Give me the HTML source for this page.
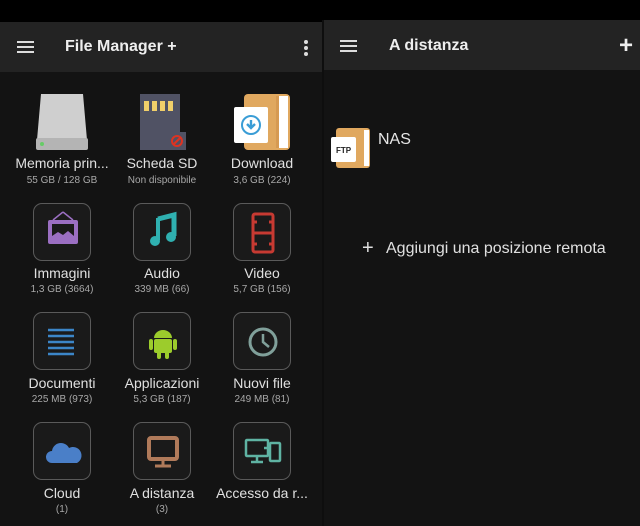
<!DOCTYPE html>
<html><head><meta charset="utf-8"><style>
*{margin:0;padding:0;box-sizing:border-box}
body{width:640px;height:526px;background:#131313;font-family:"Liberation Sans",sans-serif;position:relative;overflow:hidden;color:#e6e6e6}
.a{position:absolute}
.bar{background:#232323}
.lbl{position:absolute;width:110px;text-align:center;font-size:14px;color:#e0e0e0;white-space:nowrap}
.sub{position:absolute;width:110px;text-align:center;font-size:10px;color:#a8a8a8}
.box{position:absolute;width:58px;height:58px;border:1.5px solid #5a5a5a;border-radius:9px;background:#1a1a1a}
.box svg{position:absolute;left:0;top:0}
.ham{position:absolute;width:17px;height:2px;background:#ddd}
</style></head><body>
<div class="a" style="left:0;top:0;width:640px;height:22px;background:#000"></div>
<div class="a bar" style="left:0;top:22px;width:322px;height:50px"></div>
<div class="a bar" style="left:324px;top:20px;width:316px;height:50px"></div>
<div class="a" style="left:322px;top:20px;width:2px;height:506px;background:#0e0e0e"></div>
<div class="ham" style="left:17px;top:41px"></div><div class="ham" style="left:17px;top:46px"></div><div class="ham" style="left:17px;top:51px"></div>
<div class="a" style="left:65px;top:38px;font-size:16px;font-weight:bold;color:#eee">File Manager +</div>
<div class="a" style="left:304px;top:40px;width:4px;height:4px;border-radius:2px;background:#ddd;box-shadow:0 6px 0 #ddd,0 12px 0 #ddd"></div>
<div class="ham" style="left:340px;top:40px"></div><div class="ham" style="left:340px;top:45px"></div><div class="ham" style="left:340px;top:50px"></div>
<div class="a" style="left:389px;top:37px;font-size:16px;font-weight:bold;color:#eee">A distanza</div>
<div class="a" style="left:619px;top:37px;font-size:24px;line-height:18px;color:#eee;font-weight:bold">+</div>

<!-- row1 -->
<svg class="a" style="left:33px;top:92px" width="58" height="60"><path d="M8 2h42l4 46H4z" fill="#cfcfcf"/><rect x="3" y="46" width="52" height="12" rx="2" fill="#b4b4b4"/><circle cx="9" cy="52" r="2" fill="#6c6"/></svg>
<svg class="a" style="left:136px;top:92px" width="50" height="60"><path d="M4 2h40v38h6v18H4z" fill="#505264"/><g fill="#f1cf6a"><rect x="8" y="9" width="5" height="10"/><rect x="16" y="9" width="5" height="10"/><rect x="24" y="9" width="5" height="10"/><rect x="32" y="9" width="5" height="10"/></g><circle cx="41" cy="49" r="5" fill="none" stroke="#d32" stroke-width="2"/><path d="M37 53l8-8" stroke="#d32" stroke-width="2"/></svg>
<svg class="a" style="left:232px;top:92px" width="62" height="60"><rect x="12" y="2" width="46" height="56" rx="4" fill="#e0a85f"/><rect x="47" y="4" width="9" height="52" fill="#fff"/><rect x="44" y="4" width="3" height="52" fill="#d69a52"/><rect x="2" y="15" width="34" height="36" rx="2" fill="#fff"/><circle cx="19" cy="33" r="9" fill="none" stroke="#3a9dd6" stroke-width="2"/><path d="M19 28v8M15 32l4 4 4-4" stroke="#3a9dd6" stroke-width="2.4" fill="none"/></svg>
<div class="lbl" style="left:7px;top:155px">Memoria prin...</div><div class="sub" style="left:7px;top:175px">55 GB / 128 GB</div>
<div class="lbl" style="left:107px;top:155px">Scheda SD</div><div class="sub" style="left:107px;top:175px">Non disponibile</div>
<div class="lbl" style="left:207px;top:155px">Download</div><div class="sub" style="left:207px;top:175px">3,6 GB (224)</div>

<!-- row2 -->
<div class="box" style="left:33px;top:203px"><svg width="58" height="58"><path d="M29 8l-10 8M29 8l10 8" stroke="#9b6fc2" stroke-width="1.5" fill="none"/><rect x="14" y="16" width="30" height="24" rx="2" fill="#9b6fc2"/><path d="M18 20h22v12l-6-5-5 4-5-3-6 4z" fill="#1a1a1a"/></svg></div>
<div class="box" style="left:133px;top:203px"><svg width="58" height="58"><path d="M24 15l16-4v21" stroke="#2fb0b0" stroke-width="5" fill="none"/><path d="M24 14v22" stroke="#2fb0b0" stroke-width="4"/><circle cx="21" cy="37" r="5" fill="#2fb0b0"/><circle cx="37" cy="33" r="5" fill="#2fb0b0"/></svg></div>
<div class="box" style="left:233px;top:203px"><svg width="58" height="58"><rect x="19" y="10" width="20" height="38" rx="2" fill="none" stroke="#c73a32" stroke-width="3"/><path d="M19 29h20M19 18h4M35 18h4M19 40h4M35 40h4" stroke="#c73a32" stroke-width="3"/></svg></div>
<div class="lbl" style="left:7px;top:265px">Immagini</div><div class="sub" style="left:7px;top:284px">1,3 GB (3664)</div>
<div class="lbl" style="left:107px;top:265px">Audio</div><div class="sub" style="left:107px;top:284px">339 MB (66)</div>
<div class="lbl" style="left:207px;top:265px">Video</div><div class="sub" style="left:207px;top:284px">5,7 GB (156)</div>

<!-- row3 -->
<div class="box" style="left:33px;top:312px"><svg width="58" height="58"><path d="M14 17h26M14 23h26M14 29h26M14 35h26M14 41h26" stroke="#3c86c8" stroke-width="2.5"/></svg></div>
<div class="box" style="left:133px;top:312px"><svg width="58" height="58"><path d="M20 25a9 8 0 0 1 18 0z" fill="#9ccc2c"/><rect x="20" y="26" width="18" height="14" rx="2" fill="#9ccc2c"/><rect x="15" y="26" width="4" height="11" rx="2" fill="#9ccc2c"/><rect x="39" y="26" width="4" height="11" rx="2" fill="#9ccc2c"/><rect x="23" y="38" width="4" height="8" rx="2" fill="#9ccc2c"/><rect x="31" y="38" width="4" height="8" rx="2" fill="#9ccc2c"/></svg></div>
<div class="box" style="left:233px;top:312px"><svg width="58" height="58"><circle cx="29" cy="29" r="13" fill="none" stroke="#80a09a" stroke-width="3"/><path d="M29 21v8l6 5" stroke="#80a09a" stroke-width="2.5" fill="none"/></svg></div>
<div class="lbl" style="left:7px;top:375px">Documenti</div><div class="sub" style="left:7px;top:394px">225 MB (973)</div>
<div class="lbl" style="left:107px;top:375px">Applicazioni</div><div class="sub" style="left:107px;top:394px">5,3 GB (187)</div>
<div class="lbl" style="left:207px;top:375px">Nuovi file</div><div class="sub" style="left:207px;top:394px">249 MB (81)</div>

<!-- row4 -->
<div class="box" style="left:33px;top:422px"><svg width="58" height="58"><path d="M18 40a6 6 0 0 1 0-12a9 9 0 0 1 17-3a7 7 0 0 1 8 15z" fill="#4a7fc8"/></svg></div>
<div class="box" style="left:133px;top:422px"><svg width="58" height="58"><rect x="15" y="15" width="28" height="21" rx="2" fill="none" stroke="#b07a5a" stroke-width="4"/><path d="M29 37v5M21 43h16" stroke="#b07a5a" stroke-width="3"/></svg></div>
<div class="box" style="left:233px;top:422px"><svg width="58" height="58"><rect x="12" y="17" width="22" height="16" rx="1" fill="none" stroke="#5fb3a3" stroke-width="2.5"/><path d="M23 33v5M17 39h12M30 25h6" stroke="#5fb3a3" stroke-width="2.5"/><rect x="36" y="20" width="10" height="18" rx="1" fill="none" stroke="#5fb3a3" stroke-width="2.5"/></svg></div>
<div class="lbl" style="left:7px;top:485px">Cloud</div><div class="sub" style="left:7px;top:504px">(1)</div>
<div class="lbl" style="left:107px;top:485px">A distanza</div><div class="sub" style="left:107px;top:504px">(3)</div>
<div class="lbl" style="left:207px;top:485px">Accesso da r...</div>

<!-- right -->
<svg class="a" style="left:330px;top:127px" width="42" height="42"><rect x="6" y="1" width="34" height="40" rx="3" fill="#e0a85f"/><rect x="34" y="3" width="5" height="36" fill="#fff"/><rect x="1" y="10" width="25" height="25" rx="2" fill="#fff"/><text x="13.5" y="26" font-size="8" font-weight="bold" text-anchor="middle" fill="#222" font-family="Liberation Sans">FTP</text></svg>
<div class="a" style="left:378px;top:131px;font-size:16px;color:#e6e6e6">NAS</div>
<div class="a" style="left:362px;top:238px;font-size:20px;line-height:20px;color:#e0e0e0">+</div>
<div class="a" style="left:386px;top:240px;font-size:16px;color:#e0e0e0">Aggiungi una posizione remota</div>
</body></html>
